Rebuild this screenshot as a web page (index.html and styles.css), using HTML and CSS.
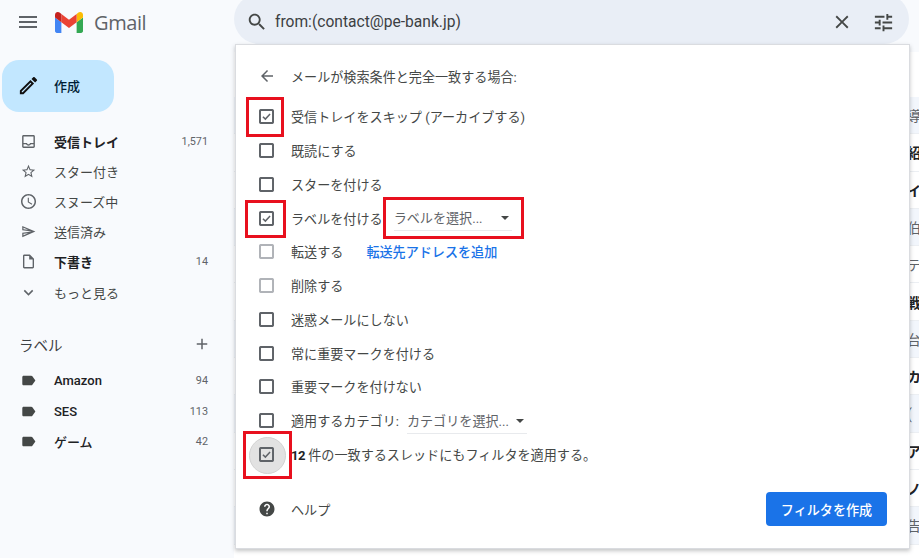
FILE: index.html
```html
<!DOCTYPE html>
<html lang="ja">
<head>
<meta charset="utf-8">
<title>Gmail</title>
<link rel="stylesheet" href="styles.css">
</head>
<body>
<div class="page">
  <header class="topbar">
    <div class="brand">
      <svg class="ic-menu" viewBox="0 0 24 24"><path d="M3 18h18v-2H3v2zm0-5h18v-2H3v2zm0-7v2h18V6H3z"/></svg>
      <svg class="logo" viewBox="52 42 88 66"><path fill="#4285f4" d="M58 108h14V74L52 59v43c0 3.32 2.69 6 6 6"/><path fill="#34a853" d="M120 108h14c3.32 0 6-2.69 6-6V59l-20 15"/><path fill="#fbbc04" d="M120 48v26l20-15v-8c0-7.42-8.47-11.65-14.4-7.2"/><path fill="#ea4335" d="M72 74V48l24 18 24-18v26L96 92"/><path fill="#c5221f" d="M52 51v8l20 15V48l-5.6-4.2c-5.94-4.45-14.4-.22-14.4 7.2"/></svg>
      <span class="wordmark">Gmail</span>
    </div>
    <div class="search">
      <svg class="ic-search" viewBox="0 0 24 24"><path d="M15.5 14h-.79l-.28-.27C15.41 12.59 16 11.11 16 9.5 16 5.91 13.09 3 9.5 3S3 5.91 3 9.5 5.91 16 9.5 16c1.61 0 3.09-.59 4.23-1.57l.27.28v.79l5 4.99L20.49 19l-4.99-5zm-6 0C7.01 14 5 11.99 5 9.5S7.01 5 9.5 5 14 7.01 14 9.5 11.99 14 9.5 14z"/></svg>
      <span class="query">from:(contact@pe-bank.jp)</span>
      <svg class="ic-close" viewBox="0 0 24 24"><path d="M19 6.41L17.59 5 12 10.59 6.41 5 5 6.41 10.59 12 5 17.59 6.41 19 12 13.41 17.59 19 19 17.59 13.41 12z"/></svg>
      <svg class="ic-tune" viewBox="0 0 24 24"><path d="M3 17v2h6v-2H3zM3 5v2h10V5H3zm10 16v-2h8v-2h-8v-2h-2v6h2zM7 9v2H3v2h4v2h2V9H7zm14 4v-2H11v2h10zm-6-4h2V7h4V5h-4V3h-2v6z"/></svg>
    </div>
  </header>

  <aside class="sidebar">
    <button class="compose">
      <svg class="ic-edit" viewBox="0 0 24 24"><path d="M14.06 9.02l.92.92L5.92 19H5v-.92l9.06-9.06M17.66 3c-.25 0-.51.1-.7.29l-1.83 1.83 3.75 3.75 1.83-1.83c.39-.39.39-1.02 0-1.41l-2.34-2.34c-.2-.2-.45-.29-.71-.29zm-3.6 3.19L3 17.25V21h3.75L17.81 9.94l-3.75-3.75z"/></svg>
      <span>作成</span>
    </button>
    <nav class="nav">
      <div class="nav-item strong"><svg viewBox="-1.4 -1.4 26.8 26.8"><path d="M19 3H5c-1.1 0-2 .9-2 2v14c0 1.1.9 2 2 2h14c1.1 0 2-.9 2-2V5c0-1.1-.9-2-2-2zm0 16H5v-3h3.56c.69 1.19 1.97 2 3.45 2s2.75-.81 3.45-2H19v3zm0-5h-4.99c0 1.1-.9 2-2 2s-2-.9-2-2H5V5h14v9z"/></svg><span class="nav-label">受信トレイ</span><span class="count">1,571</span></div>
      <div class="nav-item"><svg viewBox="-2.25 -2.25 28.5 28.5"><path d="M22 9.24l-7.19-.62L12 2 9.19 8.63 2 9.24l5.46 4.73L5.82 21 12 17.27 18.18 21l-1.63-7.03L22 9.24zM12 15.4l-3.76 2.27 1-4.28-3.32-2.88 4.38-.38L12 6.1l1.71 4.04 4.38.38-3.32 2.88 1 4.28L12 15.4z"/></svg><span class="nav-label">スター付き</span></div>
      <div class="nav-item"><svg viewBox="-.67 -.67 25.3 25.3"><path d="M11.99 2C6.47 2 2 6.48 2 12s4.47 10 9.99 10C17.52 22 22 17.52 22 12S17.52 2 11.99 2zM12 20c-4.42 0-8-3.58-8-8s3.58-8 8-8 8 3.58 8 8-3.58 8-8 8zm.5-13H11v6l5.25 3.15.75-1.23-4.5-2.67z"/></svg><span class="nav-label">スヌーズ中</span></div>
      <div class="nav-item"><svg viewBox="-3.2 -3.2 30.4 30.4"><path d="M4.01 6.03l7.51 3.22-7.52-1 .01-2.22m7.5 8.72L4 17.97v-2.22l7.51-1M2.01 3L2 10l15 2-15 2 .01 7L23 12 2.01 3z"/></svg><span class="nav-label">送信済み</span></div>
      <div class="nav-item strong"><svg viewBox="-1.8 -1.8 27.6 27.6"><path d="M14 2H6c-1.1 0-1.99.9-1.99 2L4 20c0 1.1.89 2 1.99 2H18c1.1 0 2-.9 2-2V8l-6-6zM6 20V4h7v5h5v11H6z"/></svg><span class="nav-label">下書き</span><span class="count">14</span></div>
      <div class="nav-item"><svg viewBox="0 0 24 24"><path d="M16.59 8.59L12 13.17 7.41 8.59 6 10l6 6 6-6z"/></svg><span class="nav-label">もっと見る</span></div>
    </nav>
    <div class="labels-head">
      <span>ラベル</span>
      <svg viewBox="0 0 24 24"><path d="M19 13h-6v6h-2v-6H5v-2h6V5h2v6h6v2z"/></svg>
    </div>
    <nav class="nav">
      <div class="nav-item strong-label"><svg viewBox="-1.8 -1.8 27.6 27.6"><path d="M17.63 5.84C17.27 5.33 16.67 5 16 5L5 5.01C3.9 5.01 3 5.9 3 7v10c0 1.1.9 1.99 2 1.99L16 19c.67 0 1.27-.33 1.63-.84L22 12l-4.37-6.16z"/></svg><span class="nav-label">Amazon</span><span class="count">94</span></div>
      <div class="nav-item strong-label"><svg viewBox="-1.8 -1.8 27.6 27.6"><path d="M17.63 5.84C17.27 5.33 16.67 5 16 5L5 5.01C3.9 5.01 3 5.9 3 7v10c0 1.1.9 1.99 2 1.99L16 19c.67 0 1.27-.33 1.63-.84L22 12l-4.37-6.16z"/></svg><span class="nav-label">SES</span><span class="count">113</span></div>
      <div class="nav-item strong-label"><svg viewBox="-1.8 -1.8 27.6 27.6"><path d="M17.63 5.84C17.27 5.33 16.67 5 16 5L5 5.01C3.9 5.01 3 5.9 3 7v10c0 1.1.9 1.99 2 1.99L16 19c.67 0 1.27-.33 1.63-.84L22 12l-4.37-6.16z"/></svg><span class="nav-label">ゲーム</span><span class="count">42</span></div>
    </nav>
  </aside>

  <main class="mail">
    <div class="mail-row tint light">導</div>
    <div class="mail-row bold">紹</div>
    <div class="mail-row bold">イ</div>
    <div class="mail-row tint light">伯</div>
    <div class="mail-row light">テ</div>
    <div class="mail-row bold">戦</div>
    <div class="mail-row tint light">台</div>
    <div class="mail-row bold">カ</div>
    <div class="mail-row tint light">(</div>
    <div class="mail-row bold">ア</div>
    <div class="mail-row bold">ノ</div>
    <div class="mail-row tint light">告</div>
  </main>
</div>

<section class="dialog">
  <div class="dialog-head">
    <svg class="ic-back" viewBox="0 0 24 24"><path d="M20 11H7.83l5.59-5.59L12 4l-8 8 8 8 1.41-1.41L7.83 13H20v-2z"/></svg>
    <span>メールが検索条件と完全一致する場合:</span>
  </div>
  <div class="opt">
    <svg class="box" viewBox="0 0 16 16"><rect x="1" y="1" width="14" height="14" rx="1.5"/><path class="tick" d="M4.2 8.2l2.6 2.6 5-5.4"/></svg>
    <span>受信トレイをスキップ (アーカイブする)</span>
    <i class="mark mark-a"></i>
  </div>
  <div class="opt"><svg class="box" viewBox="0 0 16 16"><rect x="1" y="1" width="14" height="14" rx="1.5"/></svg><span>既読にする</span></div>
  <div class="opt"><svg class="box" viewBox="0 0 16 16"><rect x="1" y="1" width="14" height="14" rx="1.5"/></svg><span>スターを付ける</span></div>
  <div class="opt">
    <svg class="box" viewBox="0 0 16 16"><rect x="1" y="1" width="14" height="14" rx="1.5"/><path class="tick" d="M4.2 8.2l2.6 2.6 5-5.4"/></svg>
    <span>ラベルを付ける</span>
    <span class="select select-label">ラベルを選択...<i class="caret"></i></span>
    <i class="mark mark-b"></i>
    <i class="mark mark-c"></i>
  </div>
  <div class="opt"><svg class="box off" viewBox="0 0 16 16"><rect x="1" y="1" width="14" height="14" rx="1.5"/></svg><span>転送する</span><a class="link">転送先アドレスを追加</a></div>
  <div class="opt"><svg class="box off" viewBox="0 0 16 16"><rect x="1" y="1" width="14" height="14" rx="1.5"/></svg><span>削除する</span></div>
  <div class="opt"><svg class="box" viewBox="0 0 16 16"><rect x="1" y="1" width="14" height="14" rx="1.5"/></svg><span>迷惑メールにしない</span></div>
  <div class="opt"><svg class="box" viewBox="0 0 16 16"><rect x="1" y="1" width="14" height="14" rx="1.5"/></svg><span>常に重要マークを付ける</span></div>
  <div class="opt"><svg class="box" viewBox="0 0 16 16"><rect x="1" y="1" width="14" height="14" rx="1.5"/></svg><span>重要マークを付けない</span></div>
  <div class="opt"><svg class="box" viewBox="0 0 16 16"><rect x="1" y="1" width="14" height="14" rx="1.5"/></svg><span>適用するカテゴリ:</span><span class="select select-cat">カテゴリを選択...<i class="caret"></i></span></div>
  <div class="opt">
    <i class="halo"></i>
    <svg class="box" viewBox="0 0 16 16"><rect x="1" y="1" width="14" height="14" rx="1.5"/><path class="tick" d="M4.2 8.2l2.6 2.6 5-5.4"/></svg>
    <span><b>12</b> 件の一致するスレッドにもフィルタを適用する。</span>
    <i class="mark mark-d"></i>
  </div>
  <div class="dialog-foot">
    <svg class="ic-help" viewBox="0 0 24 24"><path d="M12 2C6.48 2 2 6.48 2 12s4.48 10 10 10 10-4.48 10-10S17.52 2 12 2zm1 17h-2v-2h2v2zm2.07-7.75l-.9.92C13.45 12.9 13 13.5 13 15h-2v-.5c0-1.1.45-2.1 1.17-2.83l1.24-1.26c.37-.36.59-.86.59-1.41 0-1.1-.9-2-2-2s-2 .9-2 2H8c0-2.21 1.79-4 4-4s4 1.79 4 4c0 .88-.36 1.68-.93 2.25z"/></svg>
    <span class="help-text">ヘルプ</span>
    <button class="create">フィルタを作成</button>
  </div>
</section>
</body>
</html>
```
FILE: styles.css
```css
* { box-sizing: border-box; }
html, body { margin: 0; padding: 0; height: 100%; overflow: hidden; }
body {
  background: #f8fafd;
  color: #444746;
  font-family: Roboto, "Noto Sans CJK JP", sans-serif;
  font-size: 14px;
}
svg { display: block; flex: none; fill: currentColor; }

.page {
  display: grid;
  grid-template-columns: 234px 1fr;
  grid-template-rows: 44px 1fr;
  height: 558px;
}

/* top bar */
.topbar { grid-column: 1 / 3; display: flex; align-items: flex-end; overflow: hidden; }
.brand { width: 234px; height: 44px; flex: none; display: flex; align-items: center; padding-left: 16px; }
.ic-menu { width: 24px; height: 24px; color: #5f6368; }
.logo { width: 28px; height: 21px; margin-left: 15px; }
.wordmark { margin-left: 11px; font-family: "Open Sans", Roboto, sans-serif; font-size: 20px; color: #5f6368; letter-spacing: -0.4px; }

.search {
  width: 675px;
  height: 50px;
  flex: none;
  display: flex;
  align-items: center;
  padding: 6px 14.5px 0 12px;
  background: #e9eef6;
  border-radius: 25px;
  color: #444746;
}
.ic-search { width: 22px; height: 22px; }
.query { flex: 1; margin-left: 7px; font-size: 15.6px; color: #3c4043; }
.ic-close { width: 22px; height: 22px; }
.ic-tune { width: 23px; height: 23px; margin-left: 18.5px; }

/* sidebar */
.sidebar { padding-top: 16px; }
.compose {
  display: flex;
  align-items: center;
  width: 112px;
  height: 52px;
  margin-left: 2px;
  padding: 0 0 2px 15px;
  border: 0;
  border-radius: 17px;
  background: #c2e7ff;
  color: #001d35;
  font: 500 13px Roboto, "Noto Sans CJK JP", sans-serif;
}
.ic-edit { width: 23px; height: 23px; color: #111; margin-right: 14px; }

.nav { display: flex; flex-direction: column; }
.compose + .nav { margin-top: 14px; }
.nav-item { display: flex; align-items: center; height: 30.2px; padding: 0 26px 0 19px; font-size: 13px; color: #444746; }
.nav-item svg { width: 19px; height: 19px; color: #5f6368; }
.nav-label { flex: 1; margin-left: 16px; }
.strong .nav-label { font-weight: 700; color: #202124; }
.strong-label .nav-label { font-weight: 500; color: #202124; }
.strong-label svg { color: #444746; }
.count { font-size: 10.8px; color: #5f6368; }

.labels-head {
  display: flex;
  align-items: center;
  justify-content: space-between;
  height: 30px;
  margin-top: 22px;
  margin-bottom: 6.6px;
  padding: 0 23px 0 19px;
  font-size: 14.5px;
  color: #3c4043;
}
.labels-head svg { width: 18px; height: 18px; color: #5f6368; }

/* message list peeking out beside the dialog */
.mail { background: #fff; margin-top: 8px; padding-top: 45px; overflow: hidden; }
.mail-row {
  height: 37.3px;
  display: flex;
  align-items: center;
  padding-left: 673px;
  white-space: nowrap;
  font-size: 14px;
  border-bottom: 1px solid #eceff3;
}
.mail-row.tint { background: #f2f6fc; }
.mail-row.bold { color: #202124; font-weight: 700; }
.mail-row.light { color: #5f6368; }

/* dialog */
.dialog {
  position: absolute;
  left: 235px;
  top: 44px;
  width: 675px;
  height: 505px;
  display: flex;
  flex-direction: column;
  padding: 14px 22px 0 22px;
  background: #fff;
  border: 1px solid #dadce0;
  box-shadow: 0 2px 4px rgba(60, 64, 67, .3);
  color: #444746;
  font-size: 13.1px;
}
.dialog-head { display: flex; align-items: center; height: 34px; margin-bottom: 7px; }
.ic-back { width: 18px; height: 18px; margin-right: 15px; color: #5f6368; }
.opt { position: relative; display: flex; align-items: center; height: 33.75px; white-space: nowrap; }
.box { width: 15px; height: 15px; margin: 0 17px 0 1px; position: relative; }
.box rect { fill: none; stroke: #5f6368; stroke-width: 2.2; }
.box.off rect { stroke: #b0b3b8; }
.tick { fill: none; stroke: #5f6368; stroke-width: 1.6; }
b { font-weight: 700; color: #202124; letter-spacing: -0.5px; }
.link { margin-left: 23px; color: #1a73e8; font-weight: 500; }

.select { display: flex; align-items: center; height: 26px; border-bottom: 1px solid #e8eaed; position: relative; color: #5f6368; }
.select-label { width: 118px; margin-left: 11px; }
.select-cat { width: 120px; margin-left: 8px; }
.caret { position: absolute; top: 11px; border: 4px solid transparent; border-top: 4.5px solid #444746; border-bottom: 0; }
.select-label .caret { right: 3px; }
.select-cat .caret { right: 3px; }

.halo {
  position: absolute;
  left: -9px;
  top: -1px;
  width: 37px;
  height: 37px;
  border-radius: 50%;
  background: #e2e2e2;
  border: 1px solid #d2d2d2;
}
.mark { position: absolute; border: 3px solid #e8101e; pointer-events: none; }
.mark-a { left: -12px; top: -3px; width: 38px; height: 40px; }
.mark-b { left: -13px; top: -1px; width: 41px; height: 38px; }
.mark-c { left: 125px; top: -4px; width: 141px; height: 42px; }
.mark-d { left: -15px; top: -7px; width: 49px; height: 48px; }

.dialog-foot { display: flex; align-items: center; margin-top: 21px; height: 34px; }
.ic-help { width: 18px; height: 18px; margin-right: 15px; color: #444746; }
.help-text { flex: 1; }
.create {
  width: 121px;
  height: 34px;
  border: 0;
  border-radius: 4px;
  background: #1a73e8;
  color: #fff;
  font: 500 13.1px Roboto, "Noto Sans CJK JP", sans-serif;
}
```
